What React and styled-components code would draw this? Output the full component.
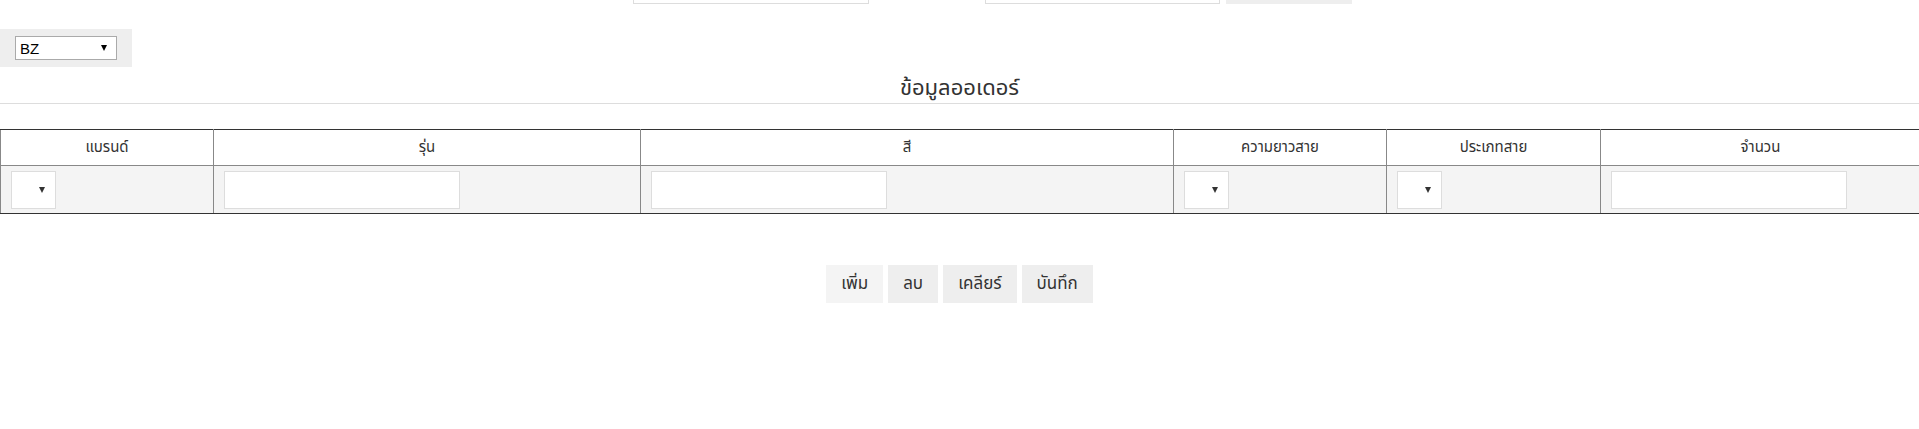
import React from 'react';
import styled, { createGlobalStyle } from 'styled-components';

const GlobalStyle = createGlobalStyle`
	html, body {
		margin: 0;
		padding: 0;
		background: #fff;
		overflow: hidden;
	}
	body {
		font-family: "Noto Sans", "Noto Sans Thai", "Liberation Sans", sans-serif;
		color: #333;
	}
`;

const Page = styled.div`
	width: 1919px;
	overflow: hidden;
`;

const SearchBar = styled.div`
	display: flex;
	justify-content: center;
	align-items: flex-end;
	height: 4px;
	overflow: hidden;
`;

const Spacer = styled.div`
	width: ${(p) => p.$w}px;
	flex-shrink: 0;
`;

const SearchInput = styled.div`
	width: ${(p) => p.$w}px;
	height: 30px;
	flex-shrink: 0;
	box-sizing: border-box;
	border: 1px solid #ddd;
	background: #fff;
`;

const SearchButton = styled.div`
	width: 126px;
	height: 30px;
	margin-left: 6px;
	flex-shrink: 0;
	background: #eee;
`;

const FilterBox = styled.div`
	display: flex;
	align-items: center;
	width: 132px;
	box-sizing: border-box;
	margin-top: 25px;
	padding: 7px 15px;
	background: #eee;
`;

const SelectWrap = styled.div`
	position: relative;
	width: ${(p) => p.$w}px;
	height: ${(p) => p.$h}px;
	box-sizing: border-box;
	border: 1px solid ${(p) => p.$border};
	background: #fff;
`;

const Arrow = styled.span`
	position: absolute;
	right: ${(p) => p.$right}px;
	top: 50%;
	transform: translateY(-50%);
	width: 0;
	height: 0;
	border-left: 3px solid transparent;
	border-right: 3px solid transparent;
	border-top: 6px solid ${(p) => p.$color};
	pointer-events: none;
`;

const NativeSelect = styled.select`
	appearance: none;
	-webkit-appearance: none;
	display: block;
	width: 100%;
	height: 100%;
	border: 0;
	margin: 0;
	padding: 0 0 0 ${(p) => p.$pad}px;
	background: transparent;
	font-family: "Liberation Sans", Arial, sans-serif;
	font-size: 15px;
	color: #000;
	outline: none;
`;

const Title = styled.h4`
	margin: 0;
	height: 37px;
	box-sizing: border-box;
	padding-top: 4px;
	text-align: center;
	font-size: 22px;
	font-weight: normal;
	line-height: 30px;
	color: #333;
	border-bottom: 1px solid #ddd;
`;

const TableWrap = styled.div`
	margin-top: 25px;
	width: 1919px;
	overflow: hidden;
`;

const OrderTable = styled.table`
	width: 1920px;
	table-layout: fixed;
	border-collapse: collapse;
	border: 1px solid #333;
`;

const HeadCell = styled.th`
	height: 35px;
	padding: 0 10px;
	border: 1px solid #888;
	border-top-color: #333;
	font-size: 15px;
	font-weight: normal;
	color: #333;
	text-align: center;
	vertical-align: middle;
	white-space: nowrap;
`;

const BodyRow = styled.tr`
	background: #f4f4f4;
`;

const BodyCell = styled.td`
	padding: 5px 10px 4px;
	border: 1px solid #888;
	border-bottom-color: #333;
	vertical-align: top;
`;

const TextInput = styled.input`
	display: block;
	width: 236px;
	height: 38px;
	box-sizing: border-box;
	margin: 0;
	border: 1px solid #ddd;
	background: #fff;
	outline: none;
	font-size: 15px;
`;

const ButtonRow = styled.div`
	display: flex;
	justify-content: center;
	gap: 5px;
	margin-top: 51px;
`;

const ActionButton = styled.button`
	height: 38px;
	padding: 0 15px;
	border: 0;
	margin: 0;
	background: ${(p) => (p.$light ? '#f4f4f4' : '#eee')};
	color: #333;
	font-family: inherit;
	font-size: 17px;
	cursor: pointer;
`;

const columns = [
	{ title: 'แบรนด์', width: 213, field: 'select' },
	{ title: 'รุ่น', width: 427, field: 'input' },
	{ title: 'สี', width: 533, field: 'input' },
	{ title: 'ความยาวสาย', width: 213, field: 'select' },
	{ title: 'ประเภทสาย', width: 214, field: 'select' },
	{ title: 'จำนวน', width: 320, field: 'input' },
];

const CellSelect = () => (
	<SelectWrap $w={45} $h={38} $border="#ddd">
		<NativeSelect $pad={4} defaultValue="">
			<option value=""></option>
		</NativeSelect>
		<Arrow $right={10} $color="#333" />
	</SelectWrap>
);

export default function App() {
	return (
		<Page>
			<GlobalStyle />
			<SearchBar>
				<Spacer $w={66} />
				<SearchInput $w={236} />
				<Spacer $w={116} />
				<SearchInput $w={235} />
				<SearchButton />
			</SearchBar>

			<FilterBox>
				<SelectWrap $w={102} $h={24} $border="#aaa">
					<NativeSelect $pad={4} defaultValue="BZ">
						<option value="BZ">BZ</option>
					</NativeSelect>
					<Arrow $right={9} $color="#000" />
				</SelectWrap>
			</FilterBox>

			<Title>ข้อมูลออเดอร์</Title>

			<TableWrap>
				<OrderTable>
					<colgroup>
						{columns.map((c) => (
							<col key={c.title} style={{ width: c.width }} />
						))}
					</colgroup>
					<thead>
						<tr>
							{columns.map((c) => (
								<HeadCell key={c.title}>{c.title}</HeadCell>
							))}
						</tr>
					</thead>
					<tbody>
						<BodyRow>
							{columns.map((c) => (
								<BodyCell key={c.title}>
									{c.field === 'select' ? <CellSelect /> : <TextInput type="text" />}
								</BodyCell>
							))}
						</BodyRow>
					</tbody>
				</OrderTable>
			</TableWrap>

			<ButtonRow>
				<ActionButton $light>เพิ่ม</ActionButton>
				<ActionButton>ลบ</ActionButton>
				<ActionButton>เคลียร์</ActionButton>
				<ActionButton>บันทึก</ActionButton>
			</ButtonRow>
		</Page>
	);
}
